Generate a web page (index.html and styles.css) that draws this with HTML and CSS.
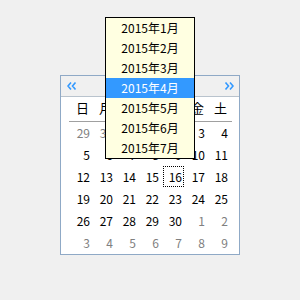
FILE: index.html
```html
<!DOCTYPE html>
<html lang="ja">
<head>
<meta charset="utf-8">
<link rel="stylesheet" href="styles.css">
</head>
<body>
<div class="cal">
  <div class="cal-head">
    <svg class="nav" width="10" height="8" viewBox="0 0 10 8"><path d="M4 0.5 L1 4 L4 7.5 M8.5 0.5 L5.5 4 L8.5 7.5" fill="none" stroke="#3399ff" stroke-width="1.6"/></svg>
    <svg class="nav" width="10" height="8" viewBox="0 0 10 8"><path d="M1.5 0.5 L4.5 4 L1.5 7.5 M6 0.5 L9 4 L6 7.5" fill="none" stroke="#3399ff" stroke-width="1.6"/></svg>
  </div>
  <div class="grid names">
    <div class="dn">日</div><div class="dn">月</div><div class="dn">火</div><div class="dn">水</div><div class="dn">木</div><div class="dn">金</div><div class="dn">土</div>
  </div>
  <div class="sep"></div>
  <div class="grid days">
    <div class="d other">29</div><div class="d other">30</div><div class="d other">31</div><div class="d">1</div><div class="d">2</div><div class="d">3</div><div class="d">4</div>
    <div class="d">5</div><div class="d">6</div><div class="d">7</div><div class="d">8</div><div class="d">9</div><div class="d">10</div><div class="d">11</div>
    <div class="d">12</div><div class="d">13</div><div class="d">14</div><div class="d">15</div><div class="d focus">16</div><div class="d">17</div><div class="d">18</div>
    <div class="d">19</div><div class="d">20</div><div class="d">21</div><div class="d">22</div><div class="d">23</div><div class="d">24</div><div class="d">25</div>
    <div class="d">26</div><div class="d">27</div><div class="d">28</div><div class="d">29</div><div class="d">30</div><div class="d other">1</div><div class="d other">2</div>
    <div class="d other">3</div><div class="d other">4</div><div class="d other">5</div><div class="d other">6</div><div class="d other">7</div><div class="d other">8</div><div class="d other">9</div>
  </div>
</div>
<div class="menu">
  <div class="item">2015年1月</div>
  <div class="item">2015年2月</div>
  <div class="item">2015年3月</div>
  <div class="item sel">2015年4月</div>
  <div class="item">2015年5月</div>
  <div class="item">2015年6月</div>
  <div class="item">2015年7月</div>
</div>
</body>
</html>
```
FILE: styles.css
```css
html, body {
  margin: 0;
  padding: 0;
  background: #f0f0f0;
  font-family: "Noto Sans CJK JP", "DejaVu Sans", sans-serif;
  font-size: 12px;
  color: #000;
}
body {
  padding: 75px 0 0 60px;
}
.cal {
  width: 178px;
  height: 178px;
  border: 1px solid #8fa9c6;
  background: #fff;
}
.cal-head {
  height: 20px;
  background: #f0f0f0;
  border-bottom: 1px solid #b9c3cd;
  display: flex;
  align-items: center;
  justify-content: space-between;
  padding: 0 5px 0 6px;
}
.nav {
  display: block;
}
.grid {
  display: grid;
  grid-template-columns: repeat(7, 23px);
  padding-left: 10px;
}
.names {
  height: 22px;
}
.dn {
  display: flex;
  align-items: center;
  justify-content: center;
  font-size: 13px;
  line-height: 22px;
}
.sep {
  margin: 2px 7px 0 8px;
  height: 1px;
  background: #a0a0a0;
}
.days {
  grid-auto-rows: 22px;
}
.d {
  display: flex;
  align-items: center;
  justify-content: flex-end;
  padding-right: 4px;
  line-height: 22px;
  position: relative;
}
.other {
  color: #808080;
}
.focus::before {
  content: "";
  position: absolute;
  left: 0;
  top: 0;
  width: 19px;
  height: 19px;
  border: 1px dotted #000;
}
.menu {
  position: absolute;
  left: 105px;
  top: 17px;
  width: 88px;
  border: 1px solid #000;
  background: #ffffe1;
}
.item {
  height: 20px;
  line-height: 20px;
  text-align: center;
}
.sel {
  background: #3399ff;
  color: #fff;
}
```
